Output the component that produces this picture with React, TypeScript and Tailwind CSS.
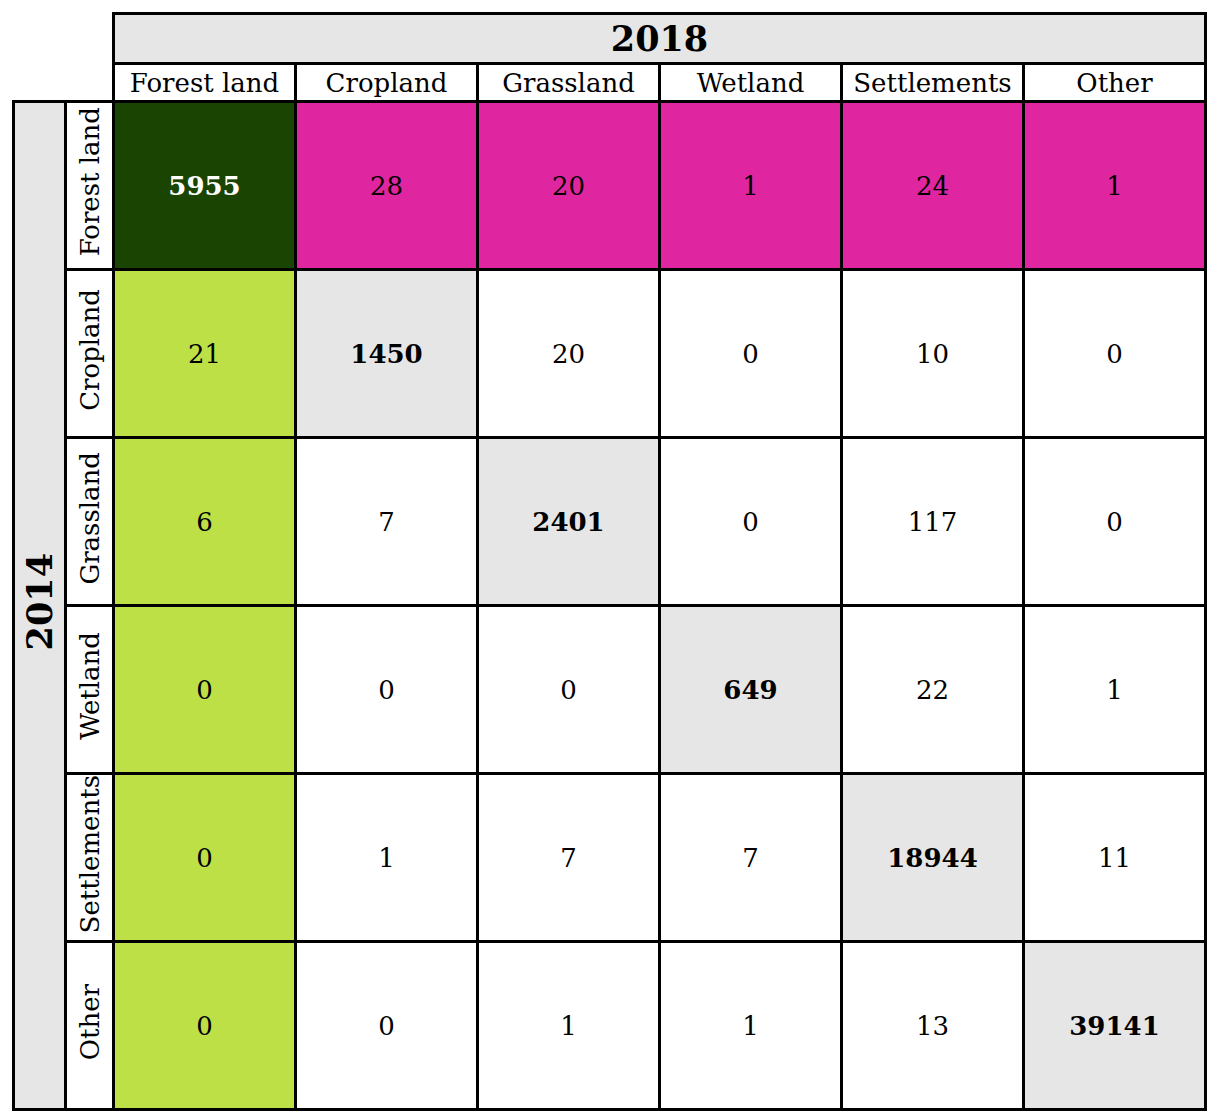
const cols = ["Forest land", "Cropland", "Grassland", "Wetland", "Settlements", "Other"];

const data: number[][] = [
  [5955, 28, 20, 1, 24, 1],
  [21, 1450, 20, 0, 10, 0],
  [6, 7, 2401, 0, 117, 0],
  [0, 0, 0, 649, 22, 1],
  [0, 1, 7, 7, 18944, 11],
  [0, 0, 1, 1, 13, 39141],
];

function cellClass(r: number, c: number) {
  if (r === 0 && c === 0) return "bg-[#194402] text-white font-bold";
  if (r === 0) return "bg-[#df26a0]";
  if (c === 0) return "bg-[#bde047]";
  if (r === c) return "bg-[#e6e6e6] font-bold";
  return "bg-white";
}

export default function App() {
  return (
    <div className="min-h-[1118px] bg-white pt-3 pl-3 font-['DejaVu_Serif',serif] text-black">
      <table className="table-fixed border-collapse">
        <colgroup>
          <col className="w-[52px]" />
          <col className="w-[48px]" />
          {cols.map((c) => (
            <col key={c} className="w-[182px]" />
          ))}
        </colgroup>
        <thead>
          <tr className="h-[50px]">
            <th colSpan={2} rowSpan={2} className="p-0" />
            <th
              colSpan={6}
              className="border-[3px] border-black bg-[#e6e6e6] p-0 text-center align-middle text-[35px] font-bold leading-none"
            >
              2018
            </th>
          </tr>
          <tr className="h-[38px]">
            {cols.map((c) => (
              <th
                key={c}
                className="border-[3px] border-black p-0 text-center align-middle text-[26px] font-normal leading-none"
              >
                {c}
              </th>
            ))}
          </tr>
        </thead>
        <tbody>
          {data.map((row, r) => (
            <tr key={r} className="h-[168px]">
              {r === 0 && (
                <td
                  rowSpan={6}
                  className="border-[3px] border-black bg-[#e6e6e6] p-0 text-center align-middle"
                >
                  <span className="inline-block rotate-180 text-[35px] font-bold leading-none [writing-mode:vertical-rl]">
                    2014
                  </span>
                </td>
              )}
              <td className="border-[3px] border-black bg-white p-0 text-center align-middle">
                <span className="inline-block rotate-180 text-[26px] leading-none [writing-mode:vertical-rl]">
                  {cols[r]}
                </span>
              </td>
              {row.map((v, c) => (
                <td
                  key={c}
                  className={`border-[3px] border-black p-0 text-center align-middle text-[26px] leading-none ${cellClass(r, c)}`}
                >
                  {v}
                </td>
              ))}
            </tr>
          ))}
        </tbody>
      </table>
    </div>
  );
}
